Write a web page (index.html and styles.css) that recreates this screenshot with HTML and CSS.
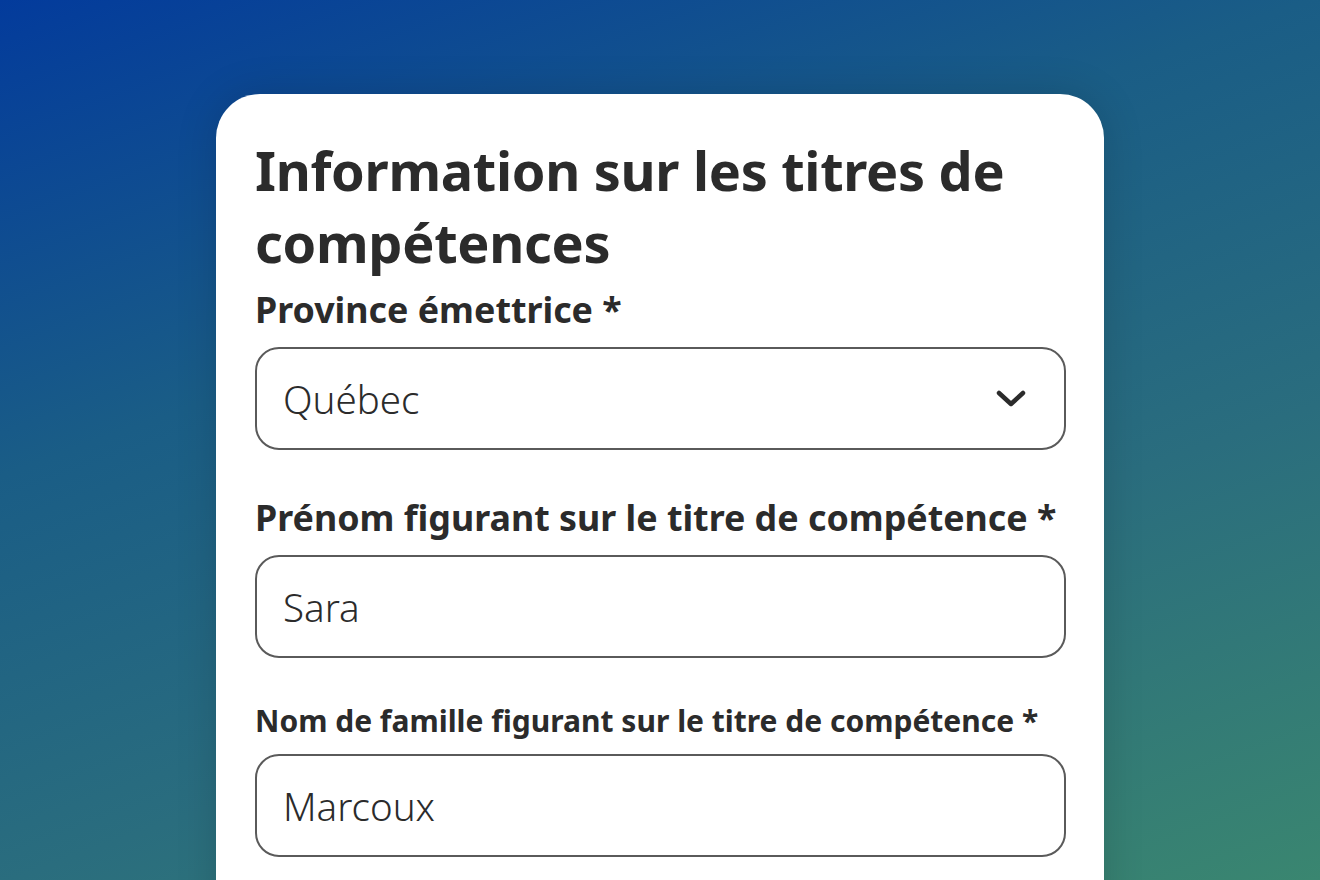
FILE: index.html
```html
<!DOCTYPE html>
<html lang="fr">
<head>
  <meta charset="UTF-8">
  <meta name="viewport" content="width=device-width, initial-scale=1.0">
  <title>Information sur les titres de compétences</title>
  <link rel="stylesheet" href="styles.css">
</head>
<body>
  <div class="card">
    <h1>Information sur les titres de compétences</h1>

    <label for="province">Province émettrice *</label>
    <div class="select-wrap">
      <select id="province">
        <option>Québec</option>
      </select>
      <svg class="chevron" width="30" height="20" viewBox="0 0 30 20">
        <path d="M3 4 L15 15 L27 4" fill="none" stroke="#2b2b2b" stroke-width="4.5" stroke-linecap="round" stroke-linejoin="round"/>
      </svg>
    </div>

    <label for="prenom" class="gap">Prénom figurant sur le titre de compétence *</label>
    <input type="text" id="prenom" value="Sara">

    <label for="nom" class="gap small">Nom de famille figurant sur le titre de compétence *</label>
    <input type="text" id="nom" value="Marcoux">
  </div>
</body>
</html>
```

FILE: styles.css
```css
html, body {
  margin: 0;
  height: 100%;
}
body {
  font-family: "Noto Sans", "Open Sans", sans-serif;
  color: #2b2b2b;
  background: linear-gradient(160deg, #033b9c 0%, #1a5d86 35%, #2a6d7e 65%, #3a8670 100%);
  overflow: hidden;
  padding-top: 94px;
  box-sizing: border-box;
}
.card {
  width: 888px;
  margin-left: 216px;
  height: 900px;
  background-color: white;
  border-radius: 44px 44px 0 0;
  box-shadow: 0 0 40px rgba(0, 0, 0, 0.15);
  padding: 40px 38px 0 39px;
  box-sizing: border-box;
}
h1 {
  font-size: 54px;
  font-weight: 700;
  line-height: 72px;
  margin: 0 0 9px 0;
  letter-spacing: -0.3px;
}
label {
  display: block;
  font-size: 35.8px;
  font-weight: 700;
  line-height: 44px;
  margin-bottom: 16px;
}
label.gap {
  margin-top: 45px;
}
label.small {
  font-size: 30px;
  line-height: 36px;
  margin-bottom: 15px;
}
.select-wrap {
  position: relative;
}
select, input {
  display: block;
  width: 100%;
  height: 103px;
  box-sizing: border-box;
  border: 2px solid #5a5a5a;
  border-radius: 24px;
  padding: 0 26px;
  font-family: inherit;
  font-size: 38.5px;
  font-weight: 300;
  color: #2b2b2b;
  background-color: white;
  -webkit-appearance: none;
  appearance: none;
  outline: none;
}
.chevron {
  position: absolute;
  right: 40px;
  top: 42px;
  pointer-events: none;
}
```
